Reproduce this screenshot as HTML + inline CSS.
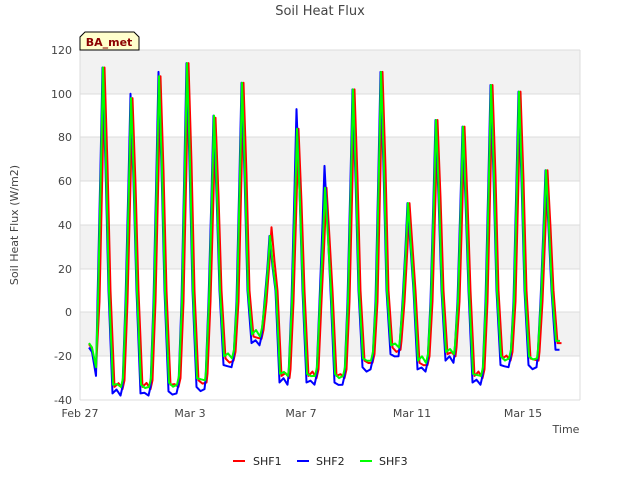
<!DOCTYPE html>
<html><head><meta charset="utf-8"><style>
body{margin:0;background:#fff;width:640px;height:480px;overflow:hidden;font-family:"DejaVu Sans","Liberation Sans",sans-serif}
</style></head><body>
<svg id="s" width="640" height="480" xmlns="http://www.w3.org/2000/svg" font-family="DejaVu Sans, Liberation Sans, sans-serif">
<rect x="80" y="50" width="500" height="350" fill="#fff"/>
<rect x="80" y="50" width="500" height="44" fill="#f2f2f2"/>
<rect x="80" y="137" width="500" height="44" fill="#f2f2f2"/>
<rect x="80" y="225" width="500" height="44" fill="#f2f2f2"/>
<rect x="80" y="312" width="500" height="44" fill="#f2f2f2"/>
<g stroke="#dcdcdc" stroke-width="1">
<line x1="80" x2="580" y1="50" y2="50"/><line x1="80" x2="580" y1="94" y2="94"/><line x1="80" x2="580" y1="137" y2="137"/><line x1="80" x2="580" y1="181" y2="181"/><line x1="80" x2="580" y1="225" y2="225"/><line x1="80" x2="580" y1="269" y2="269"/><line x1="80" x2="580" y1="312" y2="312"/><line x1="80" x2="580" y1="356" y2="356"/>
<line x1="80" x2="80" y1="50" y2="400"/><line x1="580" x2="580" y1="50" y2="400"/><line x1="80" x2="580" y1="400" y2="400"/>
</g>
<g font-size="11" fill="#444" text-anchor="end">
<text x="72" y="54">120</text><text x="72" y="98">100</text><text x="72" y="141">80</text><text x="72" y="185">60</text><text x="72" y="229">40</text><text x="72" y="273">20</text><text x="72" y="316">0</text><text x="72" y="360">-20</text><text x="72" y="404">-40</text>
</g>
<g font-size="11" fill="#444" text-anchor="middle">
<text x="80" y="417">Feb 27</text><text x="190" y="417">Mar 3</text><text x="301" y="417">Mar 7</text><text x="412" y="417">Mar 11</text><text x="523" y="417">Mar 15</text>
</g>
<text x="320" y="15" font-size="13" fill="#444" text-anchor="middle">Soil Heat Flux</text>
<text x="566" y="433" font-size="11" fill="#444" text-anchor="middle">Time</text>
<text transform="translate(18,225) rotate(-90)" font-size="11" fill="#444" text-anchor="middle">Soil Heat Flux (W/m2)</text>
<g id="lines" fill="none" stroke-width="2" stroke-linejoin="round"></g>
<path d="M80 50 V37 L85 32 H134 L139 37 V50 Z" fill="#ffffcc" stroke="#000" stroke-width="1"/>
<text x="109" y="46" font-size="11" font-weight="bold" fill="#8b0000" text-anchor="middle">BA_met</text>
<g font-size="11" fill="#222">
<line x1="233" x2="245" y1="461" y2="461" stroke="#f00" stroke-width="2"/><text x="253" y="465">SHF1</text>
<line x1="297" x2="309" y1="461" y2="461" stroke="#00f" stroke-width="2"/><text x="316" y="465">SHF2</text>
<line x1="360" x2="372" y1="461" y2="461" stroke="#0f0" stroke-width="2"/><text x="379" y="465">SHF3</text>
</g>
</svg>
<script>
var Y=function(v){return 312.5-v*2.1875};
var peaksX=[103,131,159,187,214,242,270,297,325,353,381,408,436,463,491,519,546];
var pk=[112,98,108,114,90,105,35,84,57,102,110,50,88,85,104,101,65];
var mn=[-33,-33,-32,-30,-20,-10,-28,-28,-28,-21,-15,-22,-18,-28,-20,-20,-13];
function series(off,pkm,mnoff,dx){
 var p=[[89,-14+mnoff/2],[92,-16+mnoff/2],[96,-25+mnoff]];
 for(var i=0;i<peaksX.length;i++){
  var x=peaksX[i]+dx, m=mn[i]+mnoff, v=pkm[i];
  p.push([x-5,5]);p.push([x-2,v*0.6]);p.push([x,v]);p.push([x+3,v*0.6]);p.push([x+6,10]);
  p.push([x+10,m]);
  if(i<peaksX.length-1){var nx=peaksX[i+1]+dx;
   p.push([x+14,m+2*Math.sin(i+off)]);p.push([x+18,m-1]);p.push([nx-8,m+3]);}
  else {p.push([x+14,m]);}
 }
 return p.map(function(q,j){return (j?'L':'M')+q[0].toFixed(1)+' '+Y(q[1]).toFixed(1)}).join(' ');
}
var blue=pk.slice();blue[8]=67;blue[7]=93;blue[1]=100;blue[2]=110;
var red=pk.slice();red[6]=39;red[4]=89;
var g=document.getElementById('lines');
g.innerHTML='<path stroke="#f00" d="'+series(1,red,-1,1.5)+'"/>'+
'<path stroke="#00f" d="'+series(2,blue,-4,-0.5)+'"/>'+
'<path stroke="#0f0" d="'+series(3,pk,0,0)+'"/>';
</script>
</body></html>
